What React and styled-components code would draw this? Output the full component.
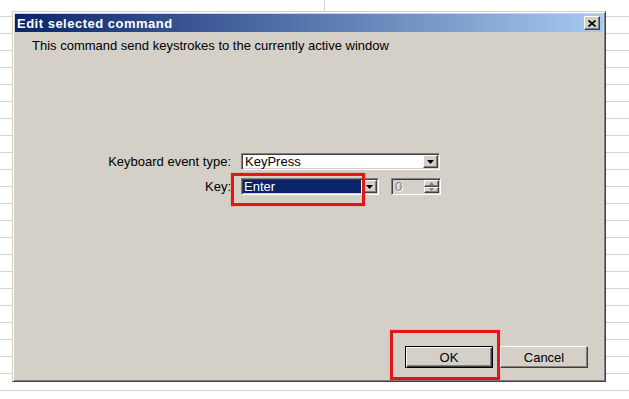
import React from 'react'
import styled, { createGlobalStyle } from 'styled-components'

const Global = createGlobalStyle`
  html, body { margin: 0; padding: 0; background: #fff; }
  body { font-family: "Liberation Sans", Arial, sans-serif; }
`

const Sheet = styled.div`
  position: relative;
  width: 629px;
  height: 399px;
  overflow: hidden;
  box-sizing: border-box;
  padding: 11px 0 0 12px;
  background-color: #fff;
  background-image:
    linear-gradient(to right, transparent 324px, #d0d0d0 324px, #d0d0d0 325px, transparent 325px),
    repeating-linear-gradient(to bottom, transparent 0 16px, #d4d4d4 16px 17px);
  background-size: 100% 11px, 100% 100%;
  background-repeat: no-repeat, repeat;
`

const Window = styled.div`
  width: 594px;
  height: 371px;
  box-sizing: border-box;
  padding: 2px;
  background: #d4d0c8;
  border: 1px solid;
  border-color: #d4d0c8 #404040 #404040 #d4d0c8;
  box-shadow: inset 1px 1px #fff, inset -1px -1px #808080;
  display: flex;
  flex-direction: column;
`

const TitleBar = styled.div`
  height: 18px;
  flex: none;
  display: flex;
  align-items: center;
  justify-content: space-between;
  padding: 0 3px 0 2px;
  background: linear-gradient(to right, #0a246a, #a6caf0);
`

const Title = styled.span`
  color: #fff;
  font-weight: bold;
  font-size: 13px;
  letter-spacing: 0.5px;
`

const Bevel = `
  background: #d4d0c8;
  border: 1px solid;
  border-color: #fff #404040 #404040 #fff;
  box-shadow: inset -1px -1px #808080;
  box-sizing: border-box;
`

const CloseBtn = styled.div`
  ${Bevel}
  width: 16px;
  height: 14px;
  display: flex;
  align-items: center;
  justify-content: center;
`

const Body = styled.div`
  flex: 1;
  display: flex;
  flex-direction: column;
  padding: 0 15px 11px 17px;
  font-size: 13px;
  color: #000;
`

const Description = styled.div`
  margin-top: 6px;
  line-height: 16px;
`

const Form = styled.div`
  margin-top: 99px;
  display: grid;
  grid-template-columns: 199px auto;
  column-gap: 10px;
  row-gap: 8px;
  align-items: center;
  justify-content: start;
`

const Label = styled.label`
  text-align: right;
  line-height: 16px;
`

const ControlRow = styled.div`
  display: flex;
  gap: 12px;
`

const Sunken = styled.div`
  box-sizing: border-box;
  height: 17px;
  width: ${p => p.$w}px;
  border: 1px solid;
  border-color: #808080 #fff #fff #808080;
  box-shadow: inset 1px 1px #404040, inset -1px -1px #d4d0c8;
  background: ${p => (p.$disabled ? '#d4d0c8' : '#fff')};
  padding: 1px;
  display: flex;
`

const Field = styled.div`
  flex: 1;
  display: flex;
  align-items: center;
  padding-left: ${p => (p.$selected ? '1px' : '2px')};
  margin-right: ${p => (p.$selected ? '1px' : '0')};
  background: ${p => (p.$selected ? '#0a246a' : 'transparent')};
  color: ${p => (p.$selected ? '#fff' : '#000')};
  line-height: 13px;
  white-space: nowrap;
`

const DisabledText = styled.span`
  color: #808080;
  text-shadow: 1px 1px #fff;
  padding-left: 2px;
  line-height: 13px;
  align-self: center;
  flex: 1;
`

const DropBtn = styled.div`
  ${Bevel}
  width: 15px;
  height: 13px;
  display: flex;
  align-items: center;
  justify-content: center;
  flex: none;
`

const SpinStack = styled.div`
  display: flex;
  flex-direction: column;
  flex: none;
`

const SpinBtn = styled.div`
  ${Bevel}
  width: 15px;
  height: 6.5px;
  display: flex;
  align-items: center;
  justify-content: center;
`

const ButtonRow = styled.div`
  margin-top: auto;
  display: flex;
  justify-content: flex-end;
  gap: 7px;
`

const Button = styled.button`
  ${Bevel}
  width: 88px;
  height: 22px;
  padding: 0;
  font-family: "Liberation Sans", Arial, sans-serif;
  font-size: 13px;
  color: #000;
  ${p => p.$default && `
    border: 1px solid #000;
    box-shadow: inset 1px 1px #fff, inset -1px -1px #404040, inset -2px -2px #808080;
  `}
`

const Mark = styled.div`
  position: absolute;
  box-sizing: border-box;
  border: 3px solid #e21616;
  box-shadow: 0 0 1px rgba(226, 22, 22, 0.5);
  left: ${p => p.$x}px;
  top: ${p => p.$y}px;
  width: ${p => p.$w}px;
  height: ${p => p.$h}px;
`

const Arrow = ({ up, color = '#000', w = 7 }) => (
  <svg width={w} height={Math.ceil(w / 2)} viewBox={`0 0 ${w} ${Math.ceil(w / 2)}`}>
    {up
      ? <polygon points={`0,${Math.ceil(w / 2)} ${w},${Math.ceil(w / 2)} ${w / 2},0`} fill={color} />
      : <polygon points={`0,0 ${w},0 ${w / 2},${Math.ceil(w / 2)}`} fill={color} />}
  </svg>
)

function App() {
  return (
    <Sheet>
      <Global />
      <Window>
        <TitleBar>
          <Title>Edit selected command</Title>
          <CloseBtn>
            <svg width="8" height="7" viewBox="0 0 8 7">
              <path d="M0.5 0.5 L7.5 6.5 M7.5 0.5 L0.5 6.5" stroke="#000" strokeWidth="1.6" />
            </svg>
          </CloseBtn>
        </TitleBar>
        <Body>
          <Description>This command send keystrokes to the currently active window</Description>
          <Form>
            <Label>Keyboard event type:</Label>
            <Sunken $w={199}>
              <Field>KeyPress</Field>
              <DropBtn><Arrow /></DropBtn>
            </Sunken>
            <Label>Key:</Label>
            <ControlRow>
              <Sunken $w={138}>
                <Field $selected>Enter</Field>
                <DropBtn><Arrow /></DropBtn>
              </Sunken>
              <Sunken $w={50} $disabled>
                <DisabledText>0</DisabledText>
                <SpinStack>
                  <SpinBtn><Arrow up w={5} color="#808080" /></SpinBtn>
                  <SpinBtn><Arrow w={5} color="#808080" /></SpinBtn>
                </SpinStack>
              </Sunken>
            </ControlRow>
          </Form>
          <ButtonRow>
            <Button $default>OK</Button>
            <Button>Cancel</Button>
          </ButtonRow>
        </Body>
      </Window>
      <Mark $x={231} $y={173} $w={134} $h={33} />
      <Mark $x={390} $y={330} $w={110} $h={50} />
    </Sheet>
  )
}

export default App
